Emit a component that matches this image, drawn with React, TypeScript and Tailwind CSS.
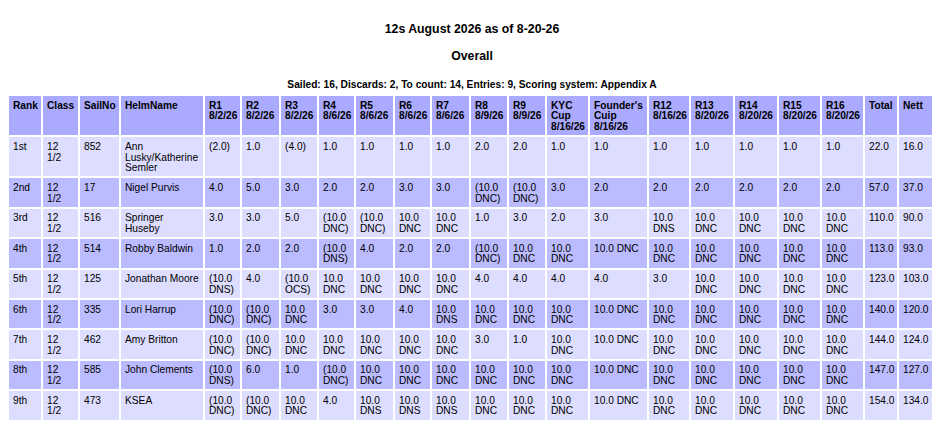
import React from 'react';

const headers = [
  'Rank', 'Class', 'SailNo', 'HelmName',
  'R1\n8/2/26', 'R2\n8/2/26', 'R3\n8/2/26',
  'R4\n8/6/26', 'R5\n8/6/26', 'R6\n8/6/26', 'R7\n8/6/26',
  'R8\n8/9/26', 'R9\n8/9/26',
  'KYC\nCup\n8/16/26', "Founder's\nCuip\n8/16/26",
  'R12\n8/16/26', 'R13\n8/20/26', 'R14\n8/20/26', 'R15\n8/20/26', 'R16\n8/20/26',
  'Total', 'Nett',
];

const widths = [32, 35, 39, 82, 35, 37, 36, 35, 37, 35, 37, 36, 36, 41, 57, 40, 42, 42, 41, 41, 32, 33];

const C = '10.0\nDNC';
const S = '10.0\nDNS';
const pC = '(10.0\nDNC)';
const pS = '(10.0\nDNS)';
const F = '10.0 DNC';
const cls = '12\n1/2';

const rows: string[][] = [
  ['1st', cls, '852', 'Ann\nLusky/Katherine\nSemler', '(2.0)', '1.0', '(4.0)', '1.0', '1.0', '1.0', '1.0', '2.0', '2.0', '1.0', '1.0', '1.0', '1.0', '1.0', '1.0', '1.0', '22.0', '16.0'],
  ['2nd', cls, '17', 'Nigel Purvis', '4.0', '5.0', '3.0', '2.0', '2.0', '3.0', '3.0', pC, pC, '3.0', '2.0', '2.0', '2.0', '2.0', '2.0', '2.0', '57.0', '37.0'],
  ['3rd', cls, '516', 'Springer\nHuseby', '3.0', '3.0', '5.0', pC, pC, C, C, '1.0', '3.0', '2.0', '3.0', S, C, C, C, C, '110.0', '90.0'],
  ['4th', cls, '514', 'Robby Baldwin', '1.0', '2.0', '2.0', pS, '4.0', '2.0', '2.0', pC, C, C, F, C, C, C, C, C, '113.0', '93.0'],
  ['5th', cls, '125', 'Jonathan Moore', pS, '4.0', '(10.0\nOCS)', C, C, C, C, '4.0', '4.0', '4.0', '4.0', '3.0', C, C, C, C, '123.0', '103.0'],
  ['6th', cls, '335', 'Lori Harrup', pC, pC, C, '3.0', '3.0', '4.0', S, C, C, C, F, C, C, C, C, C, '140.0', '120.0'],
  ['7th', cls, '462', 'Amy Britton', pC, pC, C, C, C, C, C, '3.0', '1.0', C, F, C, C, C, C, C, '144.0', '124.0'],
  ['8th', cls, '585', 'John Clements', pS, '6.0', '1.0', pC, C, C, C, C, C, C, F, C, C, C, C, C, '147.0', '127.0'],
  ['9th', cls, '473', 'KSEA', pC, pC, C, '4.0', S, S, S, C, C, C, F, C, C, C, C, C, '154.0', '134.0'],
];

const cell = 'align-top text-left whitespace-pre-line pt-[4.5px] pb-[2.5px] pl-[4px] pr-[3px] leading-[10.7px] text-[10.2px]';

export default function App() {
  return (
    <div className="min-h-screen bg-white text-black font-['Liberation_Sans',Arial,sans-serif]">
      <div className="pt-[22px] text-center">
        <h1 className="text-[12.3px] font-bold leading-[14px]">12s August 2026 as of 8-20-26</h1>
        <h2 className="mt-[12.5px] text-[12.3px] font-bold leading-[14px]">Overall</h2>
        <p className="mt-[16px] text-[10.2px] font-bold leading-[11.7px]">
          Sailed: 16, Discards: 2, To count: 14, Entries: 9, Scoring system: Appendix A
        </p>
      </div>
      <table className="mt-[4px] ml-[7px] table-fixed border-separate border-spacing-[2px] w-[927px]">
        <colgroup>
          {widths.map((w, i) => (
            <col key={i} style={{ width: w }} />
          ))}
        </colgroup>
        <thead>
          <tr className="bg-[#aaaaff]">
            {headers.map((h, i) => (
              <th key={i} className={`${cell} font-bold`}>{h}</th>
            ))}
          </tr>
        </thead>
        <tbody>
          {rows.map((r, ri) => (
            <tr key={ri} className={ri % 2 === 0 ? 'bg-[#ddddff]' : 'bg-[#bbbbff]'}>
              {r.map((v, ci) => (
                <td key={ci} className={cell}>{v}</td>
              ))}
            </tr>
          ))}
        </tbody>
      </table>
    </div>
  );
}
